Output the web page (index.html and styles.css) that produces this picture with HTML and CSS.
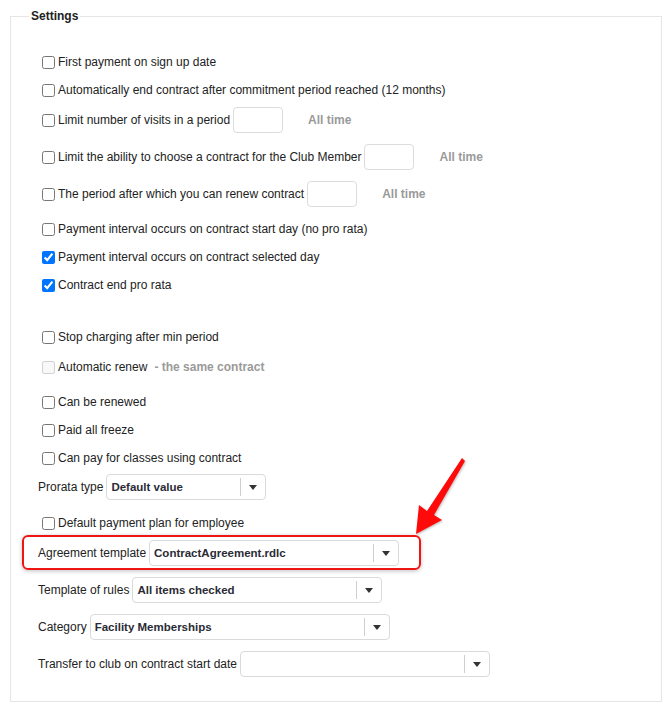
FILE: index.html
```html
<!DOCTYPE html>
<html>
<head>
<meta charset="utf-8">
<link rel="stylesheet" href="styles.css">
</head>
<body>
<fieldset class="settings">
  <legend class="settings-title">Settings</legend>
  <div class="settings-body">
    <div class="row"><label class="check"><input type="checkbox">First payment on sign up date</label></div>
    <div class="row"><label class="check"><input type="checkbox">Automatically end contract after commitment period reached (12 months)</label></div>
    <div class="field-row"><label class="check"><input type="checkbox">Limit number of visits in a period</label><input class="num" type="text"><span class="hint">All time</span></div>
    <div class="field-row"><label class="check"><input type="checkbox">Limit the ability to choose a contract for the Club Member</label><input class="num" type="text"><span class="hint">All time</span></div>
    <div class="field-row"><label class="check"><input type="checkbox">The period after which you can renew contract</label><input class="num" type="text"><span class="hint">All time</span></div>
    <div class="row"><label class="check"><input type="checkbox">Payment interval occurs on contract start day (no pro rata)</label></div>
    <div class="row"><label class="check"><input type="checkbox" checked>Payment interval occurs on contract selected day</label></div>
    <div class="row"><label class="check"><input type="checkbox" checked>Contract end pro rata</label></div>
    <div class="row gap-lg"><label class="check"><input type="checkbox">Stop charging after min period</label></div>
    <div class="row gap-md"><label class="check"><input type="checkbox" disabled>Automatic renew</label><span class="hint note">- the same contract</span></div>
    <div class="row gap-xl"><label class="check"><input type="checkbox">Can be renewed</label></div>
    <div class="row"><label class="check"><input type="checkbox">Paid all freeze</label></div>
    <div class="row"><label class="check"><input type="checkbox">Can pay for classes using contract</label></div>
    <div class="field-row tight"><span class="label">Prorata type</span><div class="combo w160"><span class="combo-value">Default value</span><span class="combo-arrow"></span></div></div>
    <div class="row gap-field"><label class="check"><input type="checkbox">Default payment plan for employee</label></div>
    <div class="highlight">
      <div class="field-row"><span class="label">Agreement template</span><div class="combo w250"><span class="combo-value">ContractAgreement.rdlc</span><span class="combo-arrow"></span></div></div>
    </div>
    <div class="field-row after-highlight"><span class="label">Template of rules</span><div class="combo w250"><span class="combo-value">All items checked</span><span class="combo-arrow"></span></div></div>
    <div class="field-row"><span class="label">Category</span><div class="combo w300"><span class="combo-value">Facility Memberships</span><span class="combo-arrow"></span></div></div>
    <div class="field-row"><span class="label">Transfer to club on contract start date</span><div class="combo w250"><span class="combo-value"></span><span class="combo-arrow"></span></div></div>
  </div>
</fieldset>
<svg class="pointer" width="60" height="84" viewBox="0 0 60 84">
  <polygon points="4,79 7,50 15,56 50,3 53,6 22,60 30,65" fill="#ff0a0a"/>
</svg>
</body>
</html>
```
FILE: styles.css
```css
html, body {
  margin: 0;
  padding: 0;
  background: #fff;
}
body {
  position: relative;
  width: 665px;
  height: 712px;
  overflow: hidden;
  font-family: "Liberation Sans", Arial, sans-serif;
  font-size: 12px;
  color: #222;
}
.settings {
  margin: 9px 3px 0 10px;
  padding: 0;
  border: 1px solid #e6e6e6;
  min-width: 0;
}
.settings-title {
  margin-left: 18px;
  padding: 0 2px;
  font-weight: bold;
  font-size: 12px;
  line-height: 14px;
  color: #222;
}
.settings-body {
  display: flex;
  flex-direction: column;
  align-items: flex-start;
  padding: 31px 20px 24px 27px;
}
.row {
  display: flex;
  align-items: center;
  height: 16px;
}
.field-row {
  display: flex;
  align-items: center;
  height: 26px;
}
.row + .row { margin-top: 12px; }
.row + .field-row { margin-top: 9px; }
.field-row + .field-row { margin-top: 11px; }
.field-row + .row { margin-top: 14px; }
.row.gap-lg { margin-top: 36px; }
.row.gap-md { margin-top: 14px; }
.row.gap-xl { margin-top: 19px; }
.row + .field-row.tight { margin-top: 8px; }
.field-row + .row.gap-field { margin-top: 15px; }
.check {
  display: flex;
  align-items: center;
  white-space: nowrap;
}
.check input {
  width: 13px;
  height: 13px;
  margin: 3px 3px 3px 4px;
}
.num {
  box-sizing: border-box;
  width: 50px;
  height: 26px;
  margin: 0 0 0 3px;
  border: 1px solid #dcdcdc;
  border-radius: 4px;
  padding: 0 4px;
  font: inherit;
  outline: none;
}
.hint {
  margin-left: 25px;
  font-weight: bold;
  color: #9a9a9a;
}
.hint.note {
  margin-left: 7px;
}
.label {
  white-space: nowrap;
  margin-right: 3px;
}
.combo {
  box-sizing: border-box;
  display: flex;
  align-items: center;
  height: 26px;
  border: 1px solid #dadada;
  border-radius: 4px;
  background: #fff;
}
.w160 { width: 160px; }
.w250 { width: 250px; }
.w300 { width: 300px; }
.combo-value {
  flex: 1;
  padding-left: 4px;
  font-weight: bold;
  font-size: 11.5px;
  color: #2b2b36;
  white-space: nowrap;
  overflow: hidden;
}
.combo-arrow {
  position: relative;
  width: 24px;
  height: 18px;
  border-left: 1px solid #cfcfcf;
}
.combo-arrow::after {
  content: "";
  position: absolute;
  left: 8px;
  top: 7px;
  border-left: 4px solid transparent;
  border-right: 4px solid transparent;
  border-top: 5px solid #333;
}
.highlight {
  margin: 4px 0 0 -16px;
  padding: 3px 20px 2px 14px;
  border: 2px solid #f01515;
  border-radius: 6px;
  box-shadow: 0 1px 4px rgba(0, 0, 0, 0.25);
}
.field-row.after-highlight { margin-top: 7px; }
.pointer {
  position: absolute;
  left: 412px;
  top: 455px;
  filter: drop-shadow(1px 1px 1px rgba(0, 0, 0, 0.25));
}
```
